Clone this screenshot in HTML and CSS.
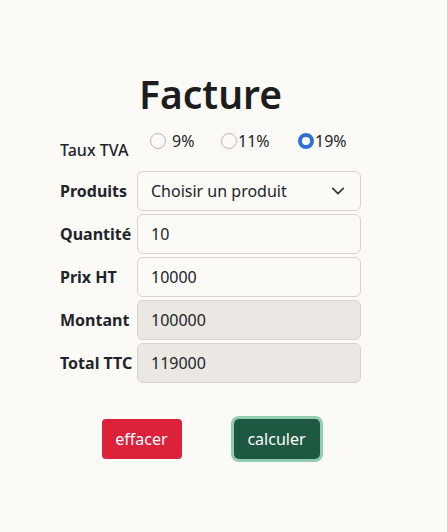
FILE: index.html
```html
<!DOCTYPE html>
<html lang="fr">
<head>
<meta charset="utf-8">
<title>Facture</title>
<link rel="stylesheet" href="styles.css">
</head>
<body>
<main class="page">
  <h1 class="title">Facture</h1>
  <form class="form">
    <div class="row tva-row">
      <span class="label label-normal">Taux TVA</span>
      <div class="radios">
        <label class="radio r1"><span class="dot"></span>9%</label>
        <label class="radio r2"><span class="dot"></span>11%</label>
        <label class="radio r3"><span class="dot checked"></span>19%</label>
      </div>
    </div>
    <div class="row">
      <span class="label">Produits</span>
      <div class="field select">Choisir un produit
        <svg class="chev" width="16" height="16" viewBox="0 0 16 16"><path d="M2 5l6 6 6-6" fill="none" stroke="#343a40" stroke-width="2" stroke-linecap="round" stroke-linejoin="round"/></svg>
      </div>
    </div>
    <div class="row">
      <span class="label">Quantité</span>
      <div class="field">10</div>
    </div>
    <div class="row">
      <span class="label">Prix HT</span>
      <div class="field">10000</div>
    </div>
    <div class="row">
      <span class="label">Montant</span>
      <div class="field disabled">100000</div>
    </div>
    <div class="row">
      <span class="label">Total TTC</span>
      <div class="field disabled">119000</div>
    </div>
    <div class="buttons">
      <button type="button" class="btn btn-danger">effacer</button>
      <button type="button" class="btn btn-success">calculer</button>
    </div>
  </form>
</main>
</body>
</html>
```

FILE: styles.css
```css
* { box-sizing: border-box; }
html, body { margin: 0; padding: 0; }
body {
  background: #fcfaf7;
  color: #212529;
  font-family: "Noto Sans", "Open Sans", sans-serif;
  font-size: 16px;
  width: 447px;
  height: 532px;
}
.page {
  width: 301px;
  margin-left: 60px;
  padding-top: 68px;
}
.title {
  margin: 0;
  text-align: center;
  font-size: 39px;
  line-height: 52px;
  font-weight: 600;
  color: #1d1d1d;
}
.form { display: flex; flex-direction: column; gap: 3px; }
.row {
  display: grid;
  grid-template-columns: 77px 224px;
  align-items: center;
  height: 40px;
}
.tva-row {
  height: 48px;
  align-items: start;
}
.label { font-weight: 700; font-size: 16px; white-space: nowrap; }
.label-normal { font-weight: 500; padding-top: 19px; }
.radios { display: flex; padding-top: 10px; margin-left: 13px; }
.radio { display: flex; align-items: center; font-size: 16px; white-space: nowrap; }
.r1 { width: 71px; }
.r2 { width: 77px; }
.dot {
  width: 16px; height: 16px;
  border: 1px solid #bdb8b3;
  border-radius: 50%;
  background: #fcfaf7;
  margin-right: 1px;
  display: inline-block;
}
.r1 .dot { margin-right: 6px; }
.dot.checked {
  border: 4px solid #2f6fd8;
  background: #fff;
}
.field {
  height: 40px;
  border: 1px solid #d9d3cd;
  border-radius: 6px;
  padding: 0 13px;
  display: flex;
  align-items: center;
  font-size: 16px;
  color: #212529;
  background: #fcfaf7;
}
.select { justify-content: space-between; }
.chev { width: 14px; height: 14px; margin-right: 2px; }
.disabled { background: #ebe8e3; }
.buttons {
  display: flex;
  justify-content: center;
  gap: 52px;
  margin-top: 33px;
}
.btn {
  font-family: inherit;
  font-size: 16px;
  height: 40px;
  border: none;
  border-radius: 4px;
  color: #fff;
  padding: 0;
}
.btn-danger { background: #dc223b; width: 80px; }
.btn-success {
  background: #1f5840;
  width: 86px;
  box-shadow: 0 0 0 3px #92cdb0;
  border-radius: 5px;
}
```
